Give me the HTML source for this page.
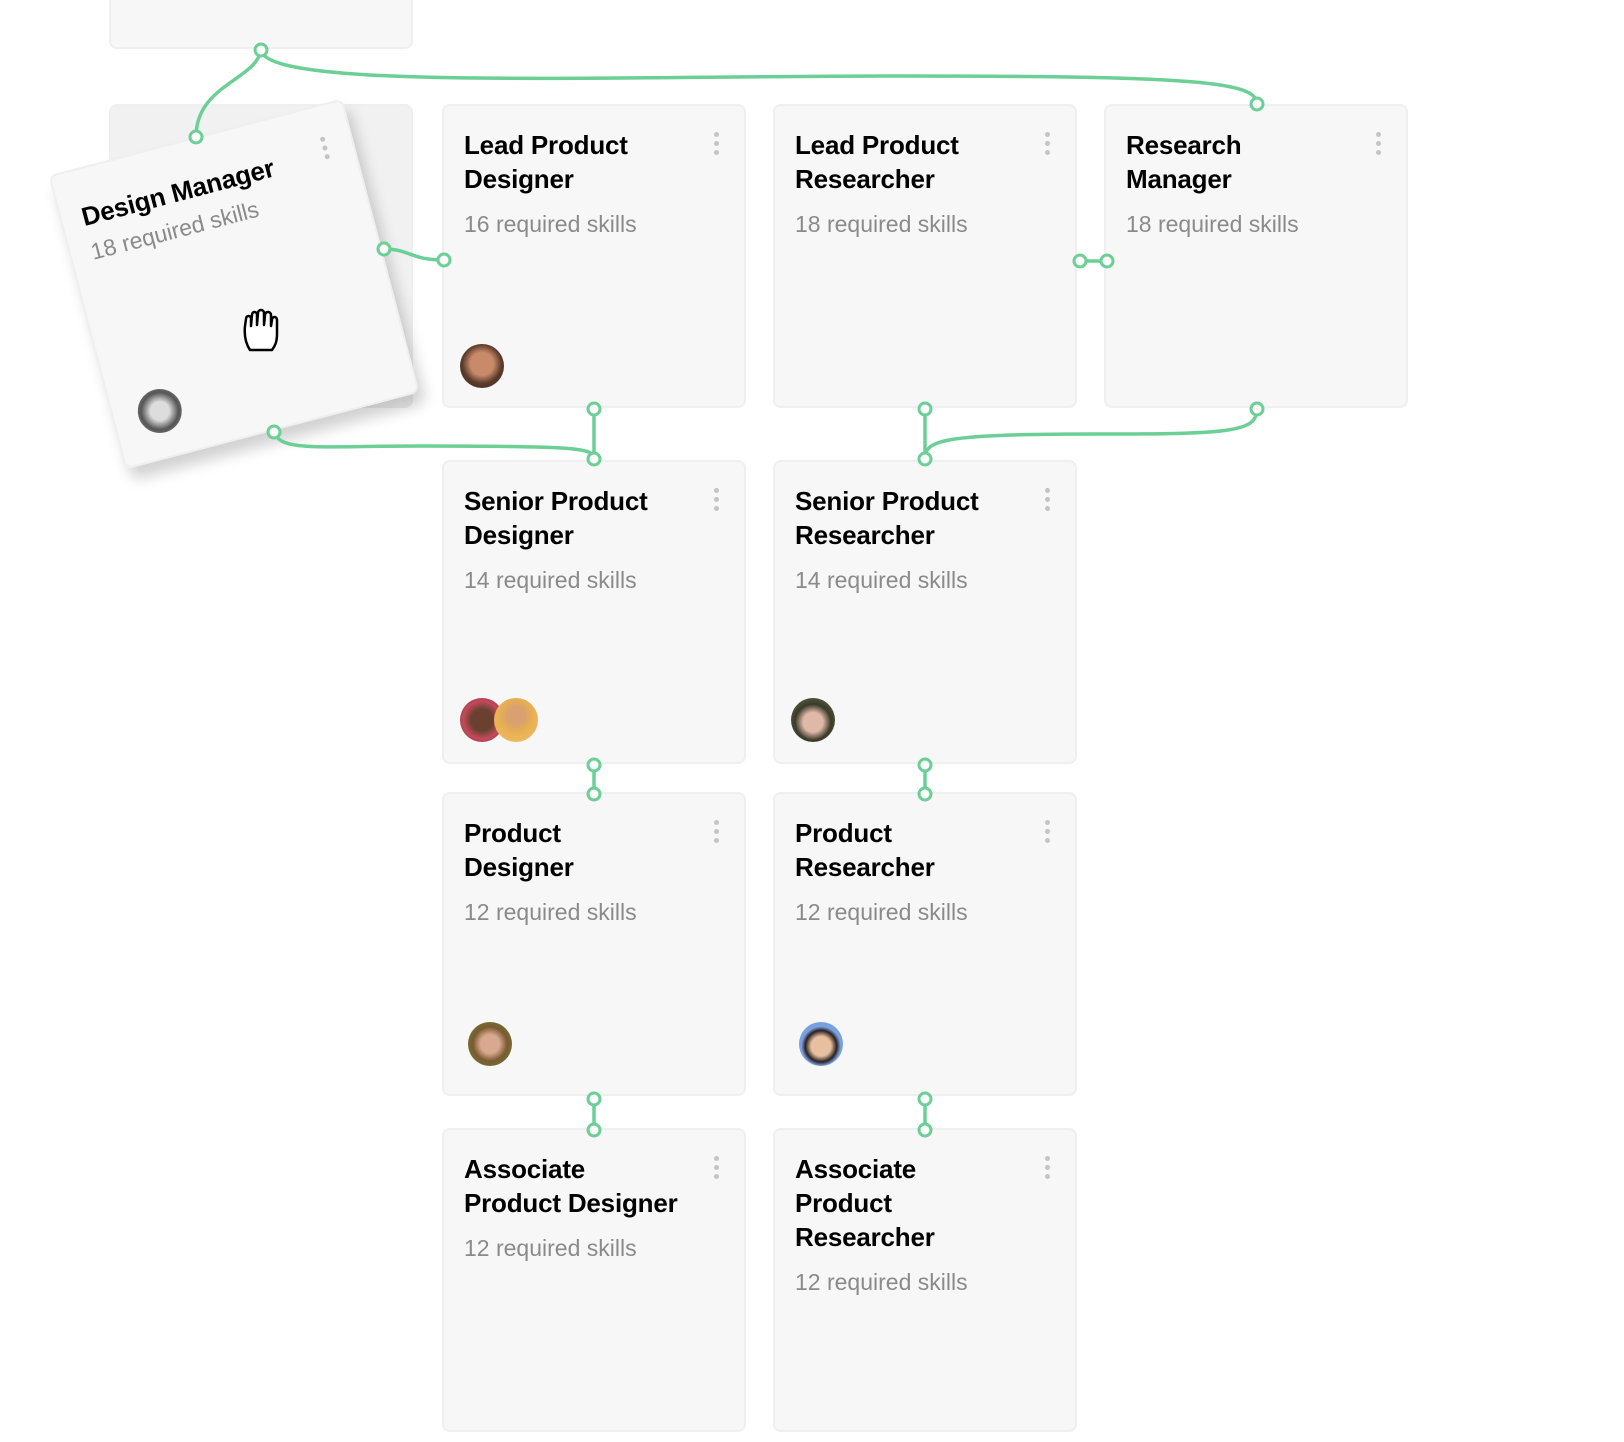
<!DOCTYPE html>
<html><head><meta charset="utf-8"><style>
html,body{margin:0;padding:0;background:#fff;width:1624px;height:1442px;overflow:hidden;position:relative;font-family:"Liberation Sans",sans-serif}
.card{position:absolute;width:304px;height:304px;box-sizing:border-box;background:#f7f7f7;border:2px solid #efefef;border-radius:8px;padding:22px 20px}
.t{font-size:26px;font-weight:bold;line-height:34px;color:#000;letter-spacing:-0.2px;white-space:nowrap}
.s{font-size:23px;color:#8a8a8a;margin-top:13px;line-height:30px}
.dots{position:absolute;right:24px;top:26px;width:6px}
.dots i{display:block;width:5px;height:5px;border-radius:50%;background:#c4c4c4;margin-bottom:4px}
.av{position:absolute;width:44px;height:44px;border-radius:50%}
</style></head><body>
<div class="card" style="left:109px;top:-20px;height:69px;"></div>
<div class="card" style="left:109px;top:104px;background:#f1f1f1;"></div>

<div class="card" style="left:442px;top:104px"><div class="t">Lead Product<br>Designer</div><div class="s">16 required skills</div><div class="dots"><i></i><i></i><i></i></div><div class="av" style="left:16px;top:238px;background:radial-gradient(circle at 50% 45%,#c98a6a 0 35%,#5a3a2a 60%,#3a2a22)"></div></div>
<div class="card" style="left:773px;top:104px"><div class="t">Lead Product<br>Researcher</div><div class="s">18 required skills</div><div class="dots"><i></i><i></i><i></i></div></div>
<div class="card" style="left:1104px;top:104px"><div class="t">Research<br>Manager</div><div class="s">18 required skills</div><div class="dots"><i></i><i></i><i></i></div></div>

<div class="card" style="left:442px;top:460px"><div class="t">Senior Product<br>Designer</div><div class="s">14 required skills</div><div class="dots"><i></i><i></i><i></i></div>
<div class="av" style="left:16px;top:236px;background:radial-gradient(circle at 50% 50%,#6a4030 0 35%,#c24a5a 60%,#8a3040)"></div>
<div class="av" style="left:50px;top:236px;background:radial-gradient(circle at 50% 40%,#d9a070 0 25%,#e8b050 50%,#f0c070)"></div></div>
<div class="card" style="left:773px;top:460px"><div class="t">Senior Product<br>Researcher</div><div class="s">14 required skills</div><div class="dots"><i></i><i></i><i></i></div>
<div class="av" style="left:16px;top:236px;background:radial-gradient(circle at 50% 55%,#e0b8a8 0 30%,#3a3a2a 55%,#6a7a4a)"></div></div>

<div class="card" style="left:442px;top:792px"><div class="t">Product<br>Designer</div><div class="s">12 required skills</div><div class="dots"><i></i><i></i><i></i></div>
<div class="av" style="left:24px;top:228px;background:radial-gradient(circle at 50% 50%,#d8a890 0 30%,#7a5a30 55%,#6a8a3a)"></div></div>
<div class="card" style="left:773px;top:792px"><div class="t">Product<br>Researcher</div><div class="s">12 required skills</div><div class="dots"><i></i><i></i><i></i></div>
<div class="av" style="left:24px;top:228px;background:radial-gradient(circle at 50% 55%,#e8c0a0 0 30%,#2a2020 48%,#7aa0e0 60%)"></div></div>

<div class="card" style="left:442px;top:1128px"><div class="t">Associate<br>Product Designer</div><div class="s">12 required skills</div><div class="dots"><i></i><i></i><i></i></div></div>
<div class="card" style="left:773px;top:1128px"><div class="t">Associate<br>Product<br>Researcher</div><div class="s">12 required skills</div><div class="dots"><i></i><i></i><i></i></div></div>

<div class="card" style="left:82px;top:132px;transform:rotate(-14.7deg);box-shadow:4px 12px 14px rgba(0,0,0,0.18);padding-top:30px">
<div class="t">Design Manager</div><div class="s" style="margin-top:4px">18 required skills</div><div class="dots" style="top:30px"><i></i><i></i><i></i></div>
<div class="av" style="left:24px;top:232px;background:radial-gradient(circle at 50% 50%,#ddd 0 30%,#555 60%,#999)"></div></div>

<svg width="1624" height="1442" style="position:absolute;left:0;top:0" fill="none" stroke="#6ccf96" stroke-width="3.5">
<path d="M261 50 C256 80 196 85 196 137"/>
<path d="M261 50 C266 90 600 76 900 76 C1200 76 1257 82 1257 104"/>
<path d="M384 249 C410 249 410 260 444 260"/>
<path d="M1080 261 L1108 261"/>
<path d="M594 409 L594 459"/>
<path d="M274 432 C280 452 320 446 420 446 C580 446 594 448 594 459"/>
<path d="M925 409 L925 459"/>
<path d="M1257 409 C1257 432 1230 434 1100 434 C940 434 925 440 925 459"/>
<path d="M594 765 L594 794"/><path d="M925 765 L925 794"/>
<path d="M594 1099 L594 1130"/><path d="M925 1099 L925 1130"/>
<g fill="#fff" stroke-width="3">
<circle cx="261" cy="50" r="6"/><circle cx="196" cy="137" r="6"/><circle cx="1257" cy="104" r="6"/>
<circle cx="384" cy="249" r="6"/><circle cx="444" cy="260" r="6"/>
<circle cx="1080" cy="261" r="6"/><circle cx="1107" cy="261" r="6"/>
<circle cx="594" cy="409" r="6"/><circle cx="594" cy="459" r="6"/><circle cx="274" cy="432" r="6"/>
<circle cx="925" cy="409" r="6"/><circle cx="925" cy="459" r="6"/><circle cx="1257" cy="409" r="6"/>
<circle cx="594" cy="765" r="6"/><circle cx="594" cy="794" r="6"/><circle cx="925" cy="765" r="6"/><circle cx="925" cy="794" r="6"/>
<circle cx="594" cy="1099" r="6"/><circle cx="594" cy="1130" r="6"/><circle cx="925" cy="1099" r="6"/><circle cx="925" cy="1130" r="6"/>
</g>
<g stroke="#000" stroke-width="2.5" fill="#fff" stroke-linejoin="round">
<path d="M250 350 C246 344 244 336 245 326 L246 319 C246 315 251 315 251 319 L251 326 L252 315 C252 311 257 311 257 315 L257 325 L258 313 C258 309 264 309 264 313 L264 325 L265 315 C265 311 271 311 271 315 L271 326 L272 320 C272 316 277 316 277 320 L277 334 C277 342 275 346 272 350 Z"/>
</g>
</svg>
</body></html>
